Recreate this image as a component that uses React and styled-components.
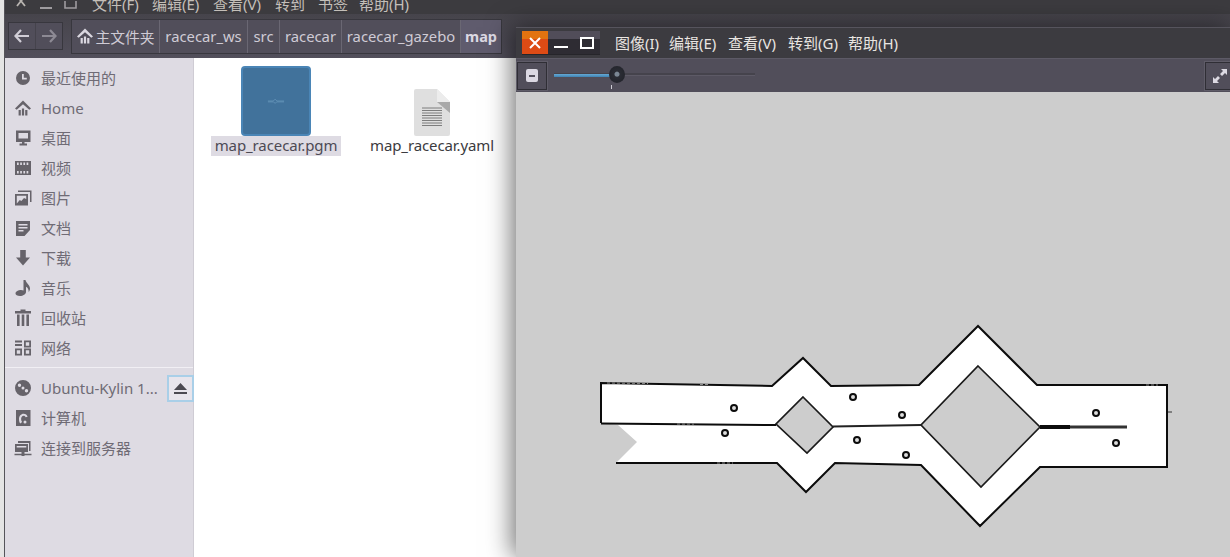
import React from "react";
import styled, { createGlobalStyle } from "styled-components";

const Global = createGlobalStyle`
  html, body { margin: 0; padding: 0; width: 1230px; height: 557px; overflow: hidden; background: #e4e4e4; }
  * { box-sizing: border-box; }
`;

const FONT = `"Noto Sans", "Noto Sans CJK SC", sans-serif`;

const Desktop = styled.div`
  position: relative;
  width: 1230px;
  height: 557px;
  overflow: hidden;
  font-family: ${FONT};
`;

/* ---------- file manager window ---------- */
const FileWindow = styled.div`
  position: absolute;
  left: 4px;
  top: 0;
  width: 1226px;
  height: 557px;
  display: flex;
  flex-direction: column;
  border-left: 1px solid #55545a;
  background: #fff;
`;
const TopMenu = styled.div`
  height: 14px;
  flex: none;
  background: #3c3b3f;
  display: flex;
  align-items: center;
  padding-left: 11px;
`;
const WinGlyphs = styled.svg`
  flex: none;
  width: 76px;
  height: 14px;
`;
const TopMenuItem = styled.span`
  flex: none;
  width: ${(p) => p.$w}px;
  font-size: 15px;
  line-height: 14px;
  height: 14px;
  margin-top: -7px;
  color: #c4bfb9;
  white-space: nowrap;
`;
const FileToolbar = styled.div`
  height: 44px;
  flex: none;
  background: linear-gradient(#46444b, #524f5b);
  display: flex;
  align-items: center;
  padding-left: 3px;
  gap: 8px;
`;
const NavGroup = styled.div`
  width: 55px;
  height: 28px;
  border: 1px solid #38373e;
  display: flex;
  background: #514e5a;
`;
const NavCell = styled.div`
  flex: 1;
  display: flex;
  align-items: center;
  justify-content: center;
  & + & { border-left: 1px solid #45434c; }
`;
const PathBar = styled.div`
  width: 431px;
  height: 35px;
  border: 1px solid #38373e;
  display: flex;
  background: #514e5a;
`;
const PathSeg = styled.div`
  width: ${(p) => p.$w}px;
  flex: none;
  display: flex;
  align-items: center;
  justify-content: center;
  gap: 1px;
  font-size: ${(p) => (p.$active ? "14.5px" : "14.8px")};
  color: ${(p) => (p.$active ? "#dcd9e3" : "#cfcbd5")};
  font-weight: ${(p) => (p.$active ? 700 : 400)};
  background: ${(p) => (p.$active ? "#5f5b6d" : "transparent")};
  border-right: ${(p) => (p.$last ? "none" : "1px solid #6a6773")};
  white-space: nowrap;
`;
const FileBody = styled.div`
  flex: 1;
  display: flex;
  min-height: 0;
`;
const Sidebar = styled.div`
  width: 189px;
  flex: none;
  background: #dedbe3;
  border-right: 1px solid #cfccd4;
  padding-top: 5px;
  display: flex;
  flex-direction: column;
`;
const SideRow = styled.div`
  height: 30px;
  flex: none;
  display: flex;
  align-items: center;
  padding-left: 9px;
  gap: 9px;
  font-size: 15px;
  line-height: 30px;
  color: #6f6b75;
  white-space: nowrap;
`;
const SideIcon = styled.svg`
  width: 18px;
  height: 18px;
  flex: none;
  fill: #66636a;
`;
const SideLabel = styled.span`
  flex: 1;
  height: 30px;
`;
const SideSep = styled.div`
  height: 1px;
  margin: 4px 0 5px;
  background: #f1eff4;
`;
const EjectButton = styled.div`
  width: 27px;
  height: 27px;
  flex: none;
  margin-right: 2px;
  border: 2px solid #a9cfe8;
  background: #e8e5ec;
  display: flex;
  align-items: center;
  justify-content: center;
`;
const FileArea = styled.div`
  flex: 1;
  background: #fff;
  display: flex;
  align-items: flex-start;
  padding: 8px 0 0 13px;
`;
const FileCell = styled.div`
  width: ${(p) => p.$w}px;
  flex: none;
  display: flex;
  flex-direction: column;
  align-items: center;
`;
const ThumbSlot = styled.div`
  height: 70px;
  display: flex;
  align-items: flex-end;
  justify-content: center;
`;
const Thumb = styled.div`
  width: 70px;
  height: 70px;
  border: 2px solid #4a85b6;
  border-radius: 4px;
  background: #41729b;
  display: flex;
  align-items: center;
  justify-content: center;
`;
const FileName = styled.div`
  height: 20px;
  line-height: 19px;
  padding: 0 4px;
  font-size: 15px;
  letter-spacing: -0.1px;
  color: ${(p) => (p.$selected ? "#4d4a55" : "#3c3b40")};
  background: ${(p) => (p.$selected ? "#dedbe3" : "transparent")};
  white-space: nowrap;
`;

/* ---------- image viewer window ---------- */
const ViewerWindow = styled.div`
  position: absolute;
  left: 516px;
  top: 27px;
  width: 719px;
  height: 530px;
  display: flex;
  flex-direction: column;
  box-shadow: -4px 0 24px rgba(0, 0, 0, 0.55);
`;
const ViewerTitle = styled.div`
  height: 31px;
  flex: none;
  background: #3c3b40;
  border-top: 1px solid #56545d;
  display: flex;
  padding: 3px 0 0 6px;
`;
const WinControls = styled.div`
  width: 78px;
  height: 23px;
  flex: none;
  display: flex;
  box-shadow: 0 1px 0 #26252a;
`;
const CloseBtn = styled.div`
  width: 26px;
  background: linear-gradient(#e27310 0 36%, #dd4b15 36%);
  display: flex;
  align-items: center;
  justify-content: center;
`;
const RestBtns = styled.div`
  flex: 1;
  background: linear-gradient(#514d59 0 36%, #2e2c33 36%);
  display: flex;
  align-items: center;
`;
const ViewerMenu = styled.div`
  display: flex;
  margin-left: 15px;
`;
const ViewerMenuItem = styled.span`
  width: ${(p) => p.$w}px;
  flex: none;
  font-size: 15px;
  line-height: 24px;
  color: #e9e5e1;
  white-space: nowrap;
`;
const ViewerToolbar = styled.div`
  height: 34px;
  flex: none;
  background: #514e5a;
  border-top: 1px solid #5d5a66;
  display: flex;
  align-items: center;
  justify-content: space-between;
  padding-left: 1px;
`;
const ToolLeft = styled.div`
  display: flex;
  align-items: center;
  gap: 7px;
`;
const ToolButton = styled.div`
  width: 30px;
  height: 28px;
  flex: none;
  border: 1px solid #2f2e35;
  outline: 1px solid #5f5c68;
  display: flex;
  align-items: center;
  justify-content: center;
`;
const MinusBox = styled.div`
  width: 12px;
  height: 13px;
  border-radius: 2px;
  background: #dbd8e2;
  display: flex;
  align-items: center;
  justify-content: center;
  &::after { content: ""; width: 6px; height: 2px; background: #55525e; }
`;
const Slider = styled.div`
  position: relative;
  width: 201px;
  height: 28px;
  display: flex;
  align-items: center;
`;
const SliderTrack = styled.div`
  width: 100%;
  height: 3px;
  margin-top: -2px;
  background: #45434c;
  border-bottom: 1px solid #5d5a66;
`;
const SliderFill = styled.div`
  position: absolute;
  left: 0;
  top: 12px;
  width: 62px;
  height: 3px;
  background: linear-gradient(#66a9d4, #3f83b3);
`;
const SliderThumb = styled.div`
  position: absolute;
  left: 55px;
  top: 4px;
  width: 16px;
  height: 17px;
  border-radius: 50%;
  background: radial-gradient(circle at 50% 48%, #7b8794 0 2px, #2b2d35 3px, #1f2027 100%);
`;
const SliderTick = styled.div`
  position: absolute;
  left: 57px;
  top: 23px;
  width: 1px;
  height: 4px;
  background: #cfcdd5;
`;
const Canvas = styled.div`
  flex: 1;
  background: #cdcdcd;
  min-height: 0;
  & > svg { display: block; }
`;

const menu = [
  ["文件(F)", 60], ["编辑(E)", 61], ["查看(V)", 62], ["转到", 43], ["书签", 41], ["帮助(H)", 60],
];
const path = [
  ["racecar_ws", 88], ["src", 32], ["racecar", 62], ["racecar_gazebo", 119],
];

const HOME_D = "M9 1.500 17 9.500l-1.700 1.300L9 5.200 2.700 10.800 1 9.500ZM4.600 11h2.200v5.500H4.600ZM7.900 9.500h2.200v7H7.900ZM11.200 11h2.200v5.500h-2.200Z";

const icons = {
  clock: <path fillRule="evenodd" d="M9 2a7 7 0 1 1 0 14A7 7 0 0 1 9 2ZM8 5v5.500h4.800V8.700H9.800V5Z" />,
  home: <path d={HOME_D} />,
  desk: <path fillRule="evenodd" d="M2 1.500h14.500v11.500H2ZM4.500 4v5.500h9.500V4ZM8 13h2.500v1.500h2.500v2H5.500v-2H8Z" />,
  video: (
    <path fillRule="evenodd" d="M1 2h16v14H1ZM3 3.500v2.500h1.700V3.500ZM6.200 3.500v2.500h1.700V3.500ZM9.400 3.500v2.500h1.700V3.500ZM12.600 3.500v2.500h1.700V3.500ZM3 12v2.500h1.700V12ZM6.200 12v2.500h1.700V12ZM9.400 12v2.500h1.700V12ZM12.600 12v2.500h1.700V12Z" />
  ),
  pics: <path fillRule="evenodd" d="M4 1.500h13.500V13H16V3H4ZM1 5h13v11.500H1ZM2.800 6.800v7.700l3-3.500 1.500 1L10 9l2.200 1V6.800Z" />,
  doc: <path fillRule="evenodd" d="M2 2h14v9l-5.500 6H2ZM4.500 5v1.600h9V5ZM4.500 8v1.600h9V8ZM4.500 11v1.600h5V11Z" />,
  down: <path d="M6.200 1h5.600v7.500H16L9 16.500 2 8.500h4.200Z" />,
  music: <path d="M11.500 1c.3 3 4.500 5 4.500 8.500 0 1.300-.5 2.500-1.300 3.500.2-2.500-1-4.300-2.700-5.200V13c0 2.300-3 4-6 4C3.300 17 1.500 16 1.500 14.500 1.500 12.500 4.500 11 7 11c1 0 1.800.2 2.500.5V1Z" />,
  trash: <path d="M6.500 .5h5v1.500h-5ZM1 2h16v2.500H1ZM3 5.500h2.600v11.500H3ZM7.700 5.500h2.600v11.500H7.700ZM12.400 5.500H15v11.500h-2.600Z" />,
  net: (
    <path fillRule="evenodd" d="M1 1.500h7v2H1ZM1 5h7v2H1ZM10 1.500h7v7h-7ZM11.800 3.300v3.400h3.400V3.300ZM1 9.500h7v7H1ZM2.800 11.300v3.400h3.400v-3.400ZM10 9.500h7v7h-7ZM11.800 11.300v3.400h3.400v-3.400Z" />
  ),
  disc: (
    <path fillRule="evenodd" d="M9 1a8 8 0 1 1 0 16A8 8 0 0 1 9 1ZM5.500 4.500a1.700 1.700 0 1 0 0 3.400 1.700 1.700 0 0 0 0-3.400ZM9 7.500a1.500 1.500 0 1 0 0 3 1.500 1.500 0 0 0 0-3ZM12.500 10a1.700 1.700 0 1 0 0 3.400 1.700 1.700 0 0 0 0-3.400Z" />
  ),
  computer: (
    <path fillRule="evenodd" d="M2 1h14.500v16H2ZM5 10c0-3 2-5.300 4.600-5.300 2 0 3.400 1 4 3l-2 .6c-.4-1-1-1.500-2-1.500C8.200 6.800 7.100 8.200 7.100 10c0 1.300.4 2.300 1 3l-1.800 1.500C5.500 13.500 5 12 5 10ZM11 11.500a1.500 1.500 0 1 0 0 3 1.500 1.500 0 0 0 0-3Z" />
  ),
  server: (
    <path fillRule="evenodd" d="M4 2h12.500v10H15V4H4ZM1 5h13v8H1ZM2.700 7v1.500h9.600V7ZM7.500 13h3v1.800h7v1.500h-7V17h-3v-.7H.5v-1.500h7Z" />
  ),
};

const places = [
  ["clock", "最近使用的"], ["home", "Home"], ["desk", "桌面"], ["video", "视频"], ["pics", "图片"],
  ["doc", "文档"], ["down", "下载"], ["music", "音乐"], ["trash", "回收站"], ["net", "网络"],
];
const devices = [["computer", "计算机"], ["server", "连接到服务器"]];

const outer =
  "601,383 772,386 803,358 831,386 919,385 978,326 1037,385 1167,385 1167,467 1040,467 980,526 921,465 835,463 806,492 777,463 616,463 637,442 618,425 600,423";
const dia1 = "803,397 833,427 807,453 776,424";
const dia2 = "978,366 1040,427 981,487 921,425";
const dots = [[734, 408], [725, 433], [853, 397], [857, 440], [902, 415], [906, 455], [1096, 413], [1116, 443]];
const gaps = [[607, 383, 648, 383.500], [700, 384.500, 708, 384.500], [677, 424, 694, 424], [1146, 385, 1158, 385], [717, 463, 733, 463]];

function MapDrawing() {
  return (
    <svg width="714" height="465" viewBox="516 92 714 465">
      <polygon points={outer} fill="#fff" />
      <polygon points={dia1} fill="#cdcdcd" stroke="#1a1a1a" strokeWidth="1.700" />
      <polygon points={dia2} fill="#cdcdcd" stroke="#1a1a1a" strokeWidth="1.700" />
      <polyline
        points="601,423 601,383 772,386 803,358 831,386 919,385 978,326 1037,385 1167,385 1167,467 1040,467 980,526 921,465 835,463 806,492 777,463 616,463"
        fill="none"
        stroke="#0c0c0c"
        strokeWidth="2"
      />
      <line x1="601" y1="423.500" x2="776" y2="425" stroke="#0c0c0c" strokeWidth="2" />
      <line x1="833" y1="426.500" x2="921" y2="425" stroke="#222" strokeWidth="1.800" />
      {gaps.map(([x1, y1, x2, y2]) => (
        <line key={x1} x1={x1} y1={y1} x2={x2} y2={y2} stroke="#8a8a8a" strokeWidth="1" strokeDasharray="3 2" />
      ))}
      <line x1="1040" y1="427" x2="1070" y2="427" stroke="#0c0c0c" strokeWidth="4" />
      <line x1="1070" y1="427" x2="1127" y2="427" stroke="#333" strokeWidth="3" />
      <line x1="1168" y1="412" x2="1172" y2="412" stroke="#333" strokeWidth="1" />
      {dots.map(([x, y]) => (
        <circle key={x} cx={x} cy={y} r="3" fill="#dcdcdc" stroke="#0c0c0c" strokeWidth="2" />
      ))}
    </svg>
  );
}

export default function App() {
  return (
    <Desktop>
      <Global />
      <FileWindow>
        <TopMenu>
          <WinGlyphs viewBox="0 0 76 14">
            <path d="M1 -4 9 6M9 -4 1 6" stroke="#b8b4b0" strokeWidth="1.800" fill="none" />
            <rect x="24" y="7" width="12" height="2" fill="#9f9ca0" />
            <path d="M49 1v7h11V1" stroke="#9f9ca0" strokeWidth="1.600" fill="none" />
          </WinGlyphs>
          {menu.map(([t, w]) => (
            <TopMenuItem key={t} $w={w}>{t}</TopMenuItem>
          ))}
        </TopMenu>
        <FileToolbar>
          <NavGroup>
            <NavCell>
              <svg width="16" height="14" viewBox="0 0 16 14">
                <path d="M7 1 1.500 7 7 13M2 7h13" stroke="#d0cdd6" strokeWidth="2.200" fill="none" />
              </svg>
            </NavCell>
            <NavCell>
              <svg width="16" height="14" viewBox="0 0 16 14">
                <path d="M9 1l5.500 6L9 13M14 7H1" stroke="#8d8a94" strokeWidth="2.200" fill="none" />
              </svg>
            </NavCell>
          </NavGroup>
          <PathBar>
            <PathSeg $w={88}>
              <svg width="18" height="18" viewBox="0 0 18 18">
                <path d={HOME_D} fill="#dad7e0" />
              </svg>
              主文件夹
            </PathSeg>
            {path.map(([t, w]) => (
              <PathSeg key={t} $w={w}>{t}</PathSeg>
            ))}
            <PathSeg $w={40} $active $last>map</PathSeg>
          </PathBar>
        </FileToolbar>
        <FileBody>
          <Sidebar>
            {places.map(([i, t]) => (
              <SideRow key={t}>
                <SideIcon viewBox="0 0 18 18">{icons[i]}</SideIcon>
                <SideLabel>{t}</SideLabel>
              </SideRow>
            ))}
            <SideSep />
            <SideRow>
              <SideIcon viewBox="0 0 18 18">{icons.disc}</SideIcon>
              <SideLabel>Ubuntu-Kylin 1...</SideLabel>
              <EjectButton>
                <svg width="15" height="11" viewBox="0 0 15 11">
                  <path d="M7.500 0 14 7H1ZM1 9h13v2H1Z" fill="#4c4a52" />
                </svg>
              </EjectButton>
            </SideRow>
            {devices.map(([i, t]) => (
              <SideRow key={t}>
                <SideIcon viewBox="0 0 18 18">{icons[i]}</SideIcon>
                <SideLabel>{t}</SideLabel>
              </SideRow>
            ))}
          </Sidebar>
          <FileArea>
            <FileCell $w={138}>
              <ThumbSlot>
                <Thumb>
                  <svg width="18" height="6" viewBox="0 0 20 6">
                    <path d="M1 3h6l2-2 2 2h8M1 4h6l2 1.500 2-1.500h8" stroke="#6b99bd" strokeWidth="0.800" fill="none" />
                  </svg>
                </Thumb>
              </ThumbSlot>
              <FileName $selected>map_racecar.pgm</FileName>
            </FileCell>
            <FileCell $w={174}>
              <ThumbSlot>
                <svg width="36" height="47" viewBox="0 0 36 47">
                  <path d="M2 0h21l13 13v32a2 2 0 0 1-2 2H2a2 2 0 0 1-2-2V2a2 2 0 0 1 2-2Z" fill="#dfdfdf" />
                  <path d="M23 13h13v11Z" fill="#a9a9a9" />
                  <path d="M23 0l13 13H23Z" fill="#ececec" />
                  <path d="M8 19h20M8 21.500h20M8 24h20M8 26.500h20M8 29h20M8 31.500h20M8 34h20M8 36.500h20" stroke="#7d7d7d" strokeWidth="1" />
                </svg>
              </ThumbSlot>
              <FileName>map_racecar.yaml</FileName>
            </FileCell>
          </FileArea>
        </FileBody>
      </FileWindow>

      <ViewerWindow>
        <ViewerTitle>
          <WinControls>
            <CloseBtn>
              <svg width="12" height="12" viewBox="0 0 12 12">
                <path d="M1 1l10 10M11 1 1 11" stroke="#fff" strokeWidth="2" />
              </svg>
            </CloseBtn>
            <RestBtns>
              <svg width="52" height="23" viewBox="0 0 52 23">
                <rect x="6" y="15" width="14" height="2" fill="#fff" />
                <rect x="33" y="7" width="12" height="10" fill="none" stroke="#fff" strokeWidth="2" />
              </svg>
            </RestBtns>
          </WinControls>
          <ViewerMenu>
            {[["图像(I)", 54], ["编辑(E)", 59], ["查看(V)", 60], ["转到(G)", 60], ["帮助(H)", 60]].map(([t, w]) => (
              <ViewerMenuItem key={t} $w={w}>{t}</ViewerMenuItem>
            ))}
          </ViewerMenu>
        </ViewerTitle>
        <ViewerToolbar>
          <ToolLeft>
            <ToolButton><MinusBox /></ToolButton>
            <Slider>
              <SliderTrack />
              <SliderFill />
              <SliderTick />
              <SliderThumb />
            </Slider>
          </ToolLeft>
          <ToolButton>
            <svg width="16" height="16" viewBox="0 0 16 16">
              <path d="M9 1h6v6l-2-2-3 3-2-2 3-3ZM7 15H1V9l2 2 3-3 2 2-3 3Z" fill="#dcd9e2" />
            </svg>
          </ToolButton>
        </ViewerToolbar>
        <Canvas>
          <MapDrawing />
        </Canvas>
      </ViewerWindow>
    </Desktop>
  );
}
